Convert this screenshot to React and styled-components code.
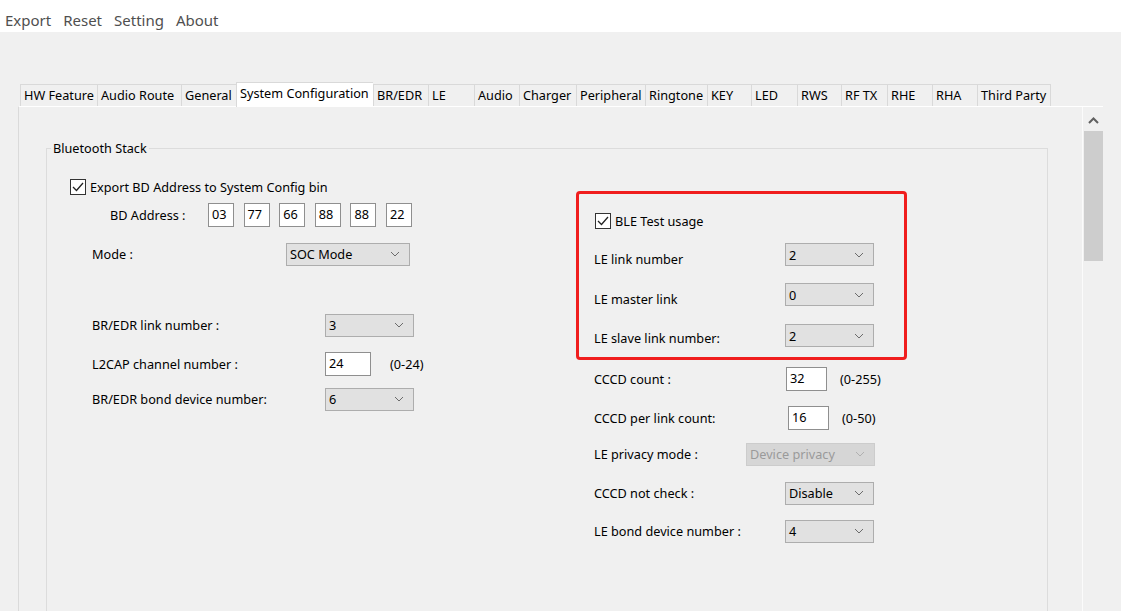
import React from 'react';
import styled, { createGlobalStyle } from 'styled-components';

const Global = createGlobalStyle`
  html, body {
    margin: 0;
    padding: 0;
    height: 611px;
    overflow: hidden;
    background: #f0f0f0;
  }
  body {
    font-family: "Noto Sans", "Open Sans", Arial, sans-serif;
    font-size: 12.7px;
    color: #000;
  }
`;

const tabs = [
  ['HW Feature', 77],
  ['Audio Route', 84],
  ['General', 55],
  ['System Configuration', 137],
  ['BR/EDR', 55],
  ['LE', 46],
  ['Audio', 45],
  ['Charger', 57],
  ['Peripheral', 69],
  ['Ringtone', 62],
  ['KEY', 44],
  ['LED', 46],
  ['RWS', 44],
  ['RF TX', 46],
  ['RHE', 45],
  ['RHA', 45],
  ['Third Party', 74],
];

const Chevron = () => (
  <svg width="10" height="6" viewBox="0 0 10 6">
    <polyline points="1,1 5,5 9,1" fill="none" strokeWidth="1" />
  </svg>
);

const Check = () => (
  <svg width="14" height="14" viewBox="0 0 14 14">
    <polyline points="2,7 5.5,10.5 12,3" fill="none" stroke="#222" strokeWidth="1.3" />
  </svg>
);

const CheckBox = ({ label }) => (
  <CheckRow>
    <Box><Check /></Box>
    <span>{label}</span>
  </CheckRow>
);

const Select = ({ value, w, disabled }) => (
  <SelectBox $w={w} $disabled={disabled}>
    <span>{value}</span>
    <Chevron />
  </SelectBox>
);

const App = () => {
  return (
    <>
      <Global />
      <Window>
        <MenuBar>
          <MenuItem>Export</MenuItem>
          <MenuItem>Reset</MenuItem>
          <MenuItem>Setting</MenuItem>
          <MenuItem>About</MenuItem>
        </MenuBar>

        <Workspace>
          <TabStrip>
            {tabs.map(([name, w]) => (
              <Tab key={name} $w={w} $active={name === 'System Configuration'}>{name}</Tab>
            ))}
          </TabStrip>

          <Panel>
            <Scroller>
              <Group>
                <legend>Bluetooth Stack</legend>
                <Columns>
                  <Column>
                    <Row $mt={19}>
                      <CheckBox label="Export BD Address to System Config bin" />
                    </Row>
                    <Row $mt={4} $indent={40}>
                      <Label $w={98}>BD Address :</Label>
                      <AddressGroup>
                        {['03', '77', '66', '88', '88', '22'].map((b, i) => (
                          <TextBox key={i} $w={26}>{b}</TextBox>
                        ))}
                      </AddressGroup>
                    </Row>
                    <Row $mt={15} $indent={22}>
                      <Label $w={194}>Mode :</Label>
                      <Select value="SOC Mode" w={124} />
                    </Row>
                    <Row $mt={47} $indent={22}>
                      <Label $w={233}>BR/EDR link number :</Label>
                      <Select value="3" w={89} />
                    </Row>
                    <Row $mt={15} $indent={22}>
                      <Label $w={233}>L2CAP channel number :</Label>
                      <TextBox $w={46}>24</TextBox>
                      <Range $gap={19}>(0-24)</Range>
                    </Row>
                    <Row $mt={11} $indent={22}>
                      <Label $w={233}>BR/EDR bond device number:</Label>
                      <Select value="6" w={89} />
                    </Row>
                  </Column>

                  <Column>
                    <Highlight>
                      <Row $mt={15} $indent={16}>
                        <CheckBox label="BLE Test usage" />
                      </Row>
                      <Row $mt={9.5} $indent={15}>
                        <Label $w={191} $dy={4.5}>LE link number</Label>
                        <Select value="2" w={89} />
                      </Row>
                      <Row $mt={16} $indent={15}>
                        <Label $w={191} $dy={4.5}>LE master link</Label>
                        <Select value="0" w={89} />
                      </Row>
                      <Row $mt={17} $indent={15}>
                        <Label $w={191} $dy={2.5}>LE slave link number:</Label>
                        <Select value="2" w={89} />
                      </Row>
                    </Highlight>
                    <Row $mt={7} $indent={18}>
                      <Label $w={192}>CCCD count :</Label>
                      <TextBox $w={41}>32</TextBox>
                      <Range $gap={13}>(0-255)</Range>
                    </Row>
                    <Row $mt={15} $indent={18}>
                      <Label $w={194}>CCCD per link count:</Label>
                      <TextBox $w={41}>16</TextBox>
                      <Range $gap={13}>(0-50)</Range>
                    </Row>
                    <Row $mt={12} $indent={18}>
                      <Label $w={152}>LE privacy mode :</Label>
                      <Select value="Device privacy" w={129} disabled />
                    </Row>
                    <Row $mt={15} $indent={18}>
                      <Label $w={191}>CCCD not check :</Label>
                      <Select value="Disable" w={89} />
                    </Row>
                    <Row $mt={14} $indent={18}>
                      <Label $w={191}>LE bond device number :</Label>
                      <Select value="4" w={89} />
                    </Row>
                  </Column>
                </Columns>
              </Group>
            </Scroller>

            <ScrollBar>
              <ScrollButton>
                <svg width="11" height="7" viewBox="0 0 11 7">
                  <polyline points="1,6 5.5,1.5 10,6" fill="none" stroke="#606060" strokeWidth="2" />
                </svg>
              </ScrollButton>
              <Thumb />
            </ScrollBar>
          </Panel>
        </Workspace>
      </Window>
    </>
  );
};

export default App;

const Window = styled.div`
  width: 1121px;
  height: 611px;
  display: flex;
  flex-direction: column;
  overflow: hidden;
`;

const MenuBar = styled.div`
  height: 32px;
  background: #fff;
  display: flex;
  align-items: center;
  padding: 8px 0 0 5px;
  box-sizing: border-box;
  gap: 12px;
`;

const MenuItem = styled.span`
  font-size: 15px;
  color: #4f4f4f;
`;

const Workspace = styled.div`
  flex: 1;
  display: flex;
  flex-direction: column;
  padding-top: 50px;
  min-height: 0;
`;

const TabStrip = styled.div`
  display: flex;
  align-items: flex-end;
  height: 24px;
  padding-left: 20px;
  position: relative;
  z-index: 1;
`;

const Tab = styled.div`
  width: ${p => p.$w}px;
  height: ${p => (p.$active ? 25 : 22)}px;
  margin-bottom: ${p => (p.$active ? -1 : 0)}px;
  box-sizing: border-box;
  padding-left: 3px;
  padding-top: ${p => (p.$active ? 2 : 2)}px;
  background: ${p => (p.$active ? '#fff' : '#f0f0f0')};
  border-top: 1px solid #d9d9d9;
  border-left: 1px solid #d9d9d9;
  line-height: 17px;
  white-space: nowrap;
  overflow: hidden;
  &:last-child { border-right: 1px solid #d9d9d9; }
`;

const Panel = styled.div`
  flex: 1;
  min-height: 0;
  margin-left: 18px;
  width: 1085px;
  box-sizing: border-box;
  display: flex;
  border-top: 1px solid #fff;
  border-left: 1px solid #dadada;
  overflow: hidden;
`;

const Scroller = styled.div`
  flex: 1;
  padding: 33px 0 0 27px;
`;

const Group = styled.fieldset`
  margin: 0;
  padding: 0;
  width: 1002px;
  min-height: 560px;
  box-sizing: border-box;
  border: 1px solid #dcdcdc;
  legend {
    margin-left: 4px;
    padding: 0 2px;
    line-height: 16px;
  }
`;

const Columns = styled.div`
  display: grid;
  grid-template-columns: 506px 331px;
  padding-left: 23px;
`;

const Column = styled.div`
  display: flex;
  flex-direction: column;
`;

const Row = styled.div`
  display: flex;
  align-items: center;
  height: 24px;
  margin-top: ${p => p.$mt || 0}px;
  padding-left: ${p => p.$indent || 0}px;
`;

const Label = styled.span`
  width: ${p => p.$w}px;
  flex-shrink: 0;
  line-height: 16px;
  padding-top: ${p => (p.$dy || 0) * 2}px;
  white-space: nowrap;
`;

const CheckRow = styled.label`
  display: flex;
  align-items: center;
  gap: 4px;
  white-space: nowrap;
`;

const Box = styled.span`
  width: 16px;
  height: 16px;
  box-sizing: border-box;
  border: 1px solid #333;
  background: #fff;
  display: flex;
  align-items: center;
  justify-content: center;
`;

const AddressGroup = styled.div`
  display: flex;
  gap: 9.6px;
`;

const TextBox = styled.div`
  width: ${p => p.$w}px;
  height: 24px;
  box-sizing: border-box;
  border: 1px solid #8f8f8f;
  background: #fff;
  padding: 2px 0 0 3px;
  line-height: 16px;
`;

const Range = styled.span`
  margin-left: ${p => p.$gap}px;
`;

const SelectBox = styled.div`
  width: ${p => p.$w}px;
  height: 23px;
  box-sizing: border-box;
  display: flex;
  align-items: center;
  justify-content: space-between;
  padding: 0 9px 0 3px;
  background: ${p => (p.$disabled ? '#d6d6d6' : '#e1e1e1')};
  border: 1px solid ${p => (p.$disabled ? '#cccccc' : '#adadad')};
  color: ${p => (p.$disabled ? '#9a9a9a' : '#000')};
  svg polyline { stroke: ${p => (p.$disabled ? '#b0b0b0' : '#6b6b6b')}; }
`;

const Highlight = styled.div`
  margin-top: 35px;
  width: 331px;
  height: 169px;
  box-sizing: border-box;
  border: 3px solid #f01e1e;
  border-radius: 4px;
  display: flex;
  flex-direction: column;
`;

const ScrollBar = styled.div`
  width: 20px;
  display: flex;
  flex-direction: column;
  border-left: 1px solid #fbfbfb;
`;

const ScrollButton = styled.div`
  height: 22px;
  display: flex;
  align-items: center;
  justify-content: center;
  padding-top: 2px;
`;

const Thumb = styled.div`
  height: 130px;
  margin-left: 1px;
  background: #cdcdcd;
`;
